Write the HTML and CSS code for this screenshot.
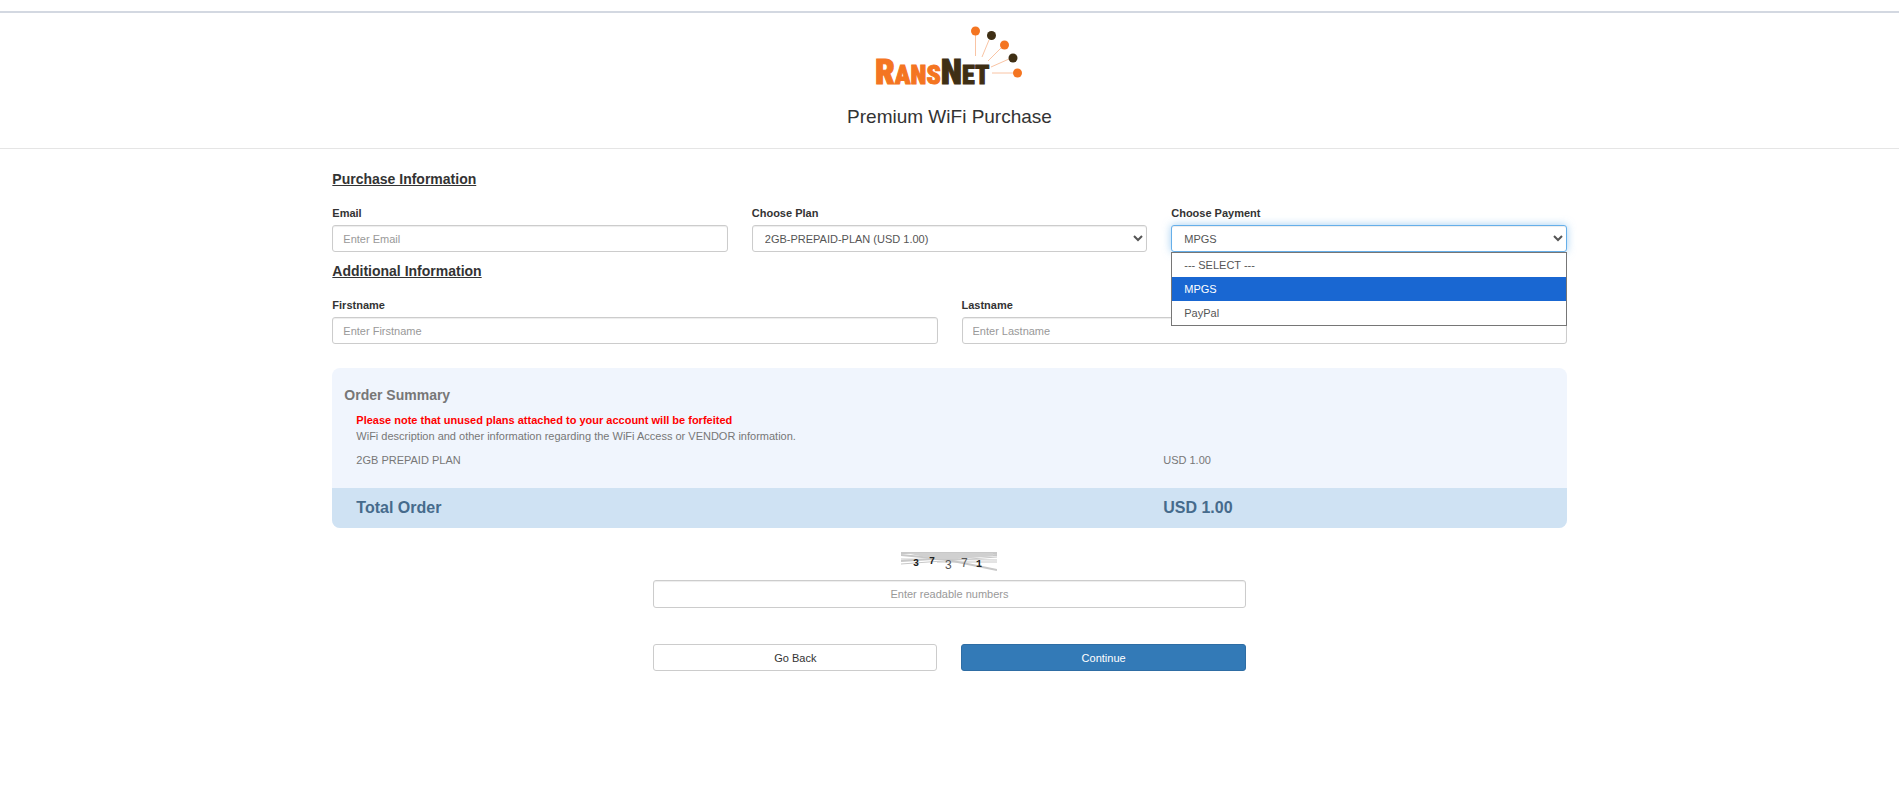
FILE: index.html
```html
<!DOCTYPE html>
<html lang="en">
<head>
<meta charset="utf-8">
<title>Premium WiFi Purchase</title>
<link rel="stylesheet" href="styles.css">
</head>
<body>
<header class="header">
  <svg class="logo" width="150" height="64" viewBox="0 0 150 64" role="img" aria-label="RansNet">
    <g stroke="#f9c4a4" stroke-width="1">
      <path d="M100.500 9V31M114 15L107 32M126 23L113 36M134 34L116 42M139 48H117" fill="none"/>
    </g>
    <g fill="#f47521">
      <circle cx="100.500" cy="6" r="4.500"/><circle cx="129.500" cy="20" r="4.500"/><circle cx="142.500" cy="48" r="4.500"/>
    </g>
    <g fill="#3f2f14">
      <circle cx="116.500" cy="10.500" r="4.500"/><circle cx="138" cy="33" r="4.500"/>
    </g>
    <text class="logo-text" x="0" y="59"><tspan class="logo-orange logo-cap">R</tspan><tspan class="logo-orange">ANS</tspan><tspan class="logo-brown logo-cap">N</tspan><tspan class="logo-brown">ET</tspan></text>
  </svg>
  <h1 class="title">Premium WiFi Purchase</h1>
</header>

<main>
<form class="form">
  <h2 class="section-title">Purchase Information</h2>
  <div class="fields fields-three">
    <div class="field">
      <label for="email">Email</label>
      <input class="control" id="email" type="email" placeholder="Enter Email">
    </div>
    <div class="field">
      <label for="plan">Choose Plan</label>
      <select class="control" id="plan"><option>2GB-PREPAID-PLAN (USD 1.00)</option></select>
    </div>
    <div class="field">
      <label for="payment">Choose Payment</label>
      <select class="control control-active" id="payment">
        <option>--- SELECT ---</option>
        <option selected>MPGS</option>
        <option>PayPal</option>
      </select>
      <ul class="menu" role="listbox" aria-label="Payment options">
        <li role="option">--- SELECT ---</li>
        <li role="option" class="menu-selected" aria-selected="true">MPGS</li>
        <li role="option">PayPal</li>
      </ul>
    </div>
  </div>

  <h2 class="section-title">Additional Information</h2>
  <div class="fields fields-two">
    <div class="field">
      <label for="firstname">Firstname</label>
      <input class="control" id="firstname" type="text" placeholder="Enter Firstname">
    </div>
    <div class="field">
      <label for="lastname">Lastname</label>
      <input class="control" id="lastname" type="text" placeholder="Enter Lastname">
    </div>
  </div>

  <section class="summary">
    <div class="summary-body">
      <h3 class="summary-title">Order Summary</h3>
      <p class="notice">Please note that unused plans attached to your account will be forfeited</p>
      <p class="description">WiFi description and other information regarding the WiFi Access or VENDOR information.</p>
      <div class="line"><span>2GB PREPAID PLAN</span><span>USD 1.00</span></div>
    </div>
    <div class="line total"><span>Total Order</span><span>USD 1.00</span></div>
  </section>

  <div class="confirm">
    <svg class="captcha" width="96" height="20" viewBox="0 0 96 20" role="img" aria-label="Readable numbers">
      <g stroke="#c8c8c8" fill="none">
        <path d="M0 1H96" stroke-width="2"/>
        <path d="M0 3L42 7L96 18" stroke-width="2"/>
        <path d="M0 9L96 3" stroke-width="2"/>
        <path d="M0 12L96 5" stroke-width="1"/>
        <path d="M0 7L96 8M36 10H96" stroke-width="1"/>
      </g>
      <path d="M4 1L92 1L92 4L56 7L34 7Z" fill="#d0d0d0"/>
      <g class="captcha-text">
        <text class="captcha-bold" x="12" y="14">3</text>
        <text class="captcha-bold" x="28" y="12">7</text>
        <text x="44" y="17">3</text>
        <text x="60" y="15">7</text>
        <text class="captcha-bold" x="75" y="15">1</text>
      </g>
    </svg>
    <input class="control control-center" type="text" placeholder="Enter readable numbers" aria-label="Enter readable numbers">
    <div class="actions">
      <button class="button" type="button">Go Back</button>
      <button class="button button-primary" type="submit">Continue</button>
    </div>
  </div>
</form>
</main>
</body>
</html>
```

FILE: styles.css
```css
* {
  box-sizing: border-box;
}

body {
  margin: 0;
  padding-top: 11px;
  background: #fff;
  color: #333;
  font-family: "Liberation Sans", Arial, sans-serif;
  font-size: 11px;
  line-height: 16px;
}

h1, h2, h3, p, ul {
  margin: 0;
  padding: 0;
}

.header {
  display: flex;
  flex-direction: column;
  align-items: center;
  gap: 16px;
  padding: 12px 0 19px;
  border-top: 2px solid #d3d8e1;
  border-bottom: 1px solid #e5e5e5;
}

.logo {
  display: block;
  overflow: visible;
}

.logo-text {
  font-family: Impact, "Roboto Condensed", "Open Sans Condensed", Roboto, sans-serif;
  font-size: 26px;
  font-weight: 900;
}

.logo-cap {
  font-size: 35px;
}

.logo-orange {
  fill: #f47521;
  stroke: #f47521;
}

.logo-brown {
  fill: #3f2f14;
  stroke: #3f2f14;
}

.title {
  font-size: 19px;
  font-weight: normal;
  line-height: 24px;
}

.form {
  width: 65%;
  margin: 0 auto;
  padding-top: 20px;
}

.section-title {
  font-size: 14px;
  line-height: 20px;
  text-decoration: underline;
}

.fields {
  display: grid;
  gap: 24px;
  padding: 16px 0 9px;
}

.fields-three {
  grid-template-columns: repeat(3, 1fr);
}

.fields-two {
  grid-template-columns: repeat(2, 1fr);
}

.field {
  position: relative;
  display: flex;
  flex-direction: column;
  gap: 4px;
}

.field label {
  font-weight: bold;
}

.control {
  width: 100%;
  height: 27px;
  padding: 0 10px;
  border: 1px solid #ccc;
  border-radius: 3px;
  background-color: #fff;
  box-shadow: inset 0 1px 1px rgba(0, 0, 0, 0.075);
  color: #555;
  font: inherit;
}

select.control {
  padding: 0 8px;
}

.control::placeholder {
  color: #999;
}

.control-active {
  border-color: #66afe9;
  box-shadow: inset 0 1px 1px rgba(0, 0, 0, 0.075), 0 0 8px rgba(102, 175, 233, 0.6);
}

.control-center {
  height: 28px;
  text-align: center;
}

.menu {
  position: absolute;
  z-index: 1;
  top: 100%;
  left: 0;
  right: 0;
  border: 1px solid #767676;
  background: #fff;
  color: #555;
  line-height: 24px;
  list-style: none;
}

.menu li {
  padding: 0 12px;
}

.menu .menu-selected {
  background: #1967d2;
  color: #fff;
}

.summary {
  margin-top: 15px;
  overflow: hidden;
  border-radius: 8px;
  background: #f0f5fd;
  color: #777;
}

.summary-body {
  padding: 15px 0 12px;
}

.summary-title {
  padding: 0 12px;
  font-size: 14px;
  line-height: 24px;
}

.notice,
.description {
  padding: 0 24px;
}

.notice {
  padding-top: 5px;
  color: #f00;
  font-weight: bold;
}

.line {
  display: grid;
  grid-template-columns: 2fr 1fr;
  padding: 8px 12px;
}

.line span {
  padding-left: 12px;
}

.total {
  background: #cfe2f3;
  color: #466b8c;
  font-size: 16px;
  font-weight: bold;
  line-height: 24px;
}

.confirm {
  display: flex;
  flex-direction: column;
  align-items: center;
  gap: 8px;
  width: 48%;
  margin: 24px auto 0;
}

.actions {
  display: grid;
  grid-template-columns: 1fr 1fr;
  gap: 24px;
  width: 100%;
  padding-top: 28px;
}

.button {
  height: 27px;
  padding: 0 12px;
  border: 1px solid #ccc;
  border-radius: 3px;
  background: #fff;
  color: #333;
  font: inherit;
}

.button-primary {
  border-color: #2e6da4;
  background: #337ab7;
  color: #fff;
}

.captcha-text {
  fill: #555;
  font-family: "Liberation Sans", sans-serif;
  font-size: 12px;
}

.captcha-bold {
  fill: #222;
  font-family: "Liberation Mono", monospace;
  font-size: 10px;
  font-weight: bold;
}
```
